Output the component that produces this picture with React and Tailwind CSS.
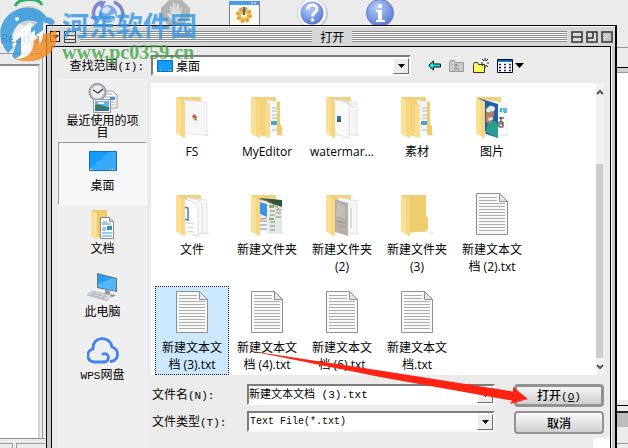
import React, { useState } from 'react'

const places = [
    { name: "最近使用的项目", icon: "recent" },
    { name: "桌面", icon: "desktop" },
    { name: "文档", icon: "docs" },
    { name: "此电脑", icon: "pc" },
    { name: "WPS网盘", icon: "cloud" },
]

const files = [
    { name: "FS", kind: "fs" },
    { name: "MyEditor", kind: "nested" },
    { name: "watermar...", kind: "papers" },
    { name: "素材", kind: "nested" },
    { name: "图片", kind: "photo" },
    { name: "文件", kind: "word" },
    { name: "新建文件夹", kind: "web" },
    { name: "新建文件夹 (2)", kind: "gray" },
    { name: "新建文件夹 (3)", kind: "empty" },
    { name: "新建文本文档 (2).txt", kind: "txt" },
    { name: "新建文本文档 (3).txt", kind: "txt" },
    { name: "新建文本文档 (4).txt", kind: "txt" },
    { name: "新建文本文档 (6).txt", kind: "txt" },
    { name: "新建文本文档.txt", kind: "txt" },
]

const TextFile = () => (
    <svg className="w-8 h-[44px]" viewBox="0 0 32 44">
        <path d="M.5.5h23l8 8v33H.5z" fill="#f8f9f9" stroke="#8f8f8f" />
        <path d="M23.5.5v8h8z" fill="#e3e5e6" stroke="#8f8f8f" />
        <path d="M3 4.5h18M3 7.5h18M3 10.5h26M3 13.5h26M3 16.5h26M3 19.5h26M3 22.5h26M3 25.5h26M3 28.5h26M3 31.5h26M3 34.5h26M3 37.5h26" stroke="#adadad" />
    </svg>
)

const FolderContent = ({ kind }) => {
    switch (kind) {
        case "fs":
            return (
                <>
                    <path d="M8 5l23 2v33l-22-1z" fill="#f6f6f7" stroke="#dcdcdc" strokeWidth=".6" />
                    <path d="M18 19l3 3-1 2-4-2z" fill="#d8452f" />
                    <path d="M16 23l3 1 2 0-1 2z" fill="#4b9b4c" />
                </>
            )
        case "nested":
            return (
                <>
                    <path d="M16 5l11 2v32H16z" fill="#f4f6f8" />
                    <path d="M21 13h5M21 16h5M21 20h5M21 23h5M21 35h5" stroke="#a5bccb" strokeWidth="1" />
                    <path d="M20 26h6v4h-6z" fill="#4a9fd4" />
                    <path d="M26 6l3 1v22l2 2v9h-5z" fill="#f1cb6a" />
                    <path d="M9 5l10 4v34L9 40z" fill="#f5d37d" />
                    <path d="M14 9l5 0v34l-5-1z" fill="#f9dd92" />
                </>
            )
        case "papers":
            return (
                <>
                    <path d="M12 4l19 4v33l-10-2z" fill="#f5f5f5" stroke="#d8d8d8" strokeWidth=".6" />
                    <path d="M8 4l15 5v34L9 39z" fill="#fafafa" stroke="#cfcfcf" strokeWidth=".6" />
                    <path d="M10 4c7 1 14 3 17 9" fill="none" stroke="#d9d0ae" />
                    <path d="M11 21h4v6h-4z" fill="#2a7bc6" />
                    <path d="M11 25l4-1v3h-4z" fill="#2c6a3c" />
                </>
            )
        case "photo":
            return (
                <>
                    <path d="M10 5l21 3v32l-10 1z" fill="#fbfbfb" stroke="#ddd" strokeWidth=".5" />
                    <path d="M24 14l2 3M26 13l-2 4M28 13v3c0 2 2 2 2 0v-3" stroke="#22a8d8" strokeWidth="1.5" fill="none" />
                    <path d="M23 23h5M25 22v5M23 27h4v5h-4zM24 29h3" stroke="#2d2d2d" fill="none" />
                    <path d="M2 3l20 6v34L10 39z" fill="#2160ac" />
                    <path d="M10 37c1-8 3-10 5-11 5-1 7 4 7 7v10z" fill="#2a9f8c" />
                    <path d="M10 18c2-6 8-6 8-1l-1 8-4 4-3-2z" fill="#b98365" />
                    <path d="M10 16c0-4 6-8 9-3 0 3-2 4-4 3-2 2-4 1-5 0zM12 23l4-1 1 2-4 2z" fill="#e6ebee" />
                </>
            )
        case "word":
            return (
                <>
                    <path d="M14 5l17 2v33l-10 1z" fill="#f4f4f4" stroke="#d7d7d7" strokeWidth=".6" />
                    <path d="M10 4l12 3 4 6v26l-4 3z" fill="#f9f9f9" stroke="#ccc" strokeWidth=".6" />
                    <path d="M8 6l10 3 4 5v29L9 39z" fill="#fff" stroke="#c7c7c7" strokeWidth=".6" />
                    <path d="M8 14l4 1v12l-4-1" fill="none" stroke="#3f7be0" strokeWidth="1.5" />
                    <path d="M10 30l8 1M11 34l8 1M11 38l7 1" stroke="#c5c5c5" strokeWidth=".8" />
                </>
            )
        case "web":
            return (
                <>
                    <path d="M8 5l23 3v33l-14 0z" fill="#e5e8e5" />
                    <path d="M8 5l23 2v7l-12-4z" fill="#235b3a" />
                    <path d="M7 7l10 2v32l-8-2z" fill="#f5f8fa" />
                    <path d="M9 9l7 2v13l-7-3z" fill="#3b91ed" />
                    <path d="M9 28h7M9 32h7M9 36h7M19 18h5M19 22h5M19 29h5M19 33h5M19 37h5M25 17h5M25 20h5M25 24h5" stroke="#7e8d83" strokeWidth="1" />
                    <path d="M18 12h5v3h-5zM18 25h5v2h-5z" fill="#7fb96a" />
                    <path d="M6 6l12 2 10 8M9 26l7-1" stroke="#d8493c" strokeWidth=".8" fill="none" />
                </>
            )
        case "gray":
            return (
                <>
                    <path d="M12 4l19 4v33l-12-1z" fill="#f6f6f6" stroke="#d5d5d5" strokeWidth=".6" />
                    <path d="M25 15v20" stroke="#bfc4d4" />
                    <path d="M8 6l14 4v33L9 39z" fill="#b4b0a9" />
                    <path d="M11 10l8 3v12l-9-2z" fill="#c2beb7" />
                    <path d="M11 28l9 2M12 33l8 1" stroke="#9c978f" />
                </>
            )
        default:
            return (
                <path d="M8 2h17v21l2 2v12l-19 3z" fill="#efcc6c" />
            )
    }
}

const FileIcon = ({ kind }) => {
    if (kind === "txt") return <TextFile />
    return (
        <svg className="w-8 h-[44px] overflow-visible" viewBox="0 0 32 44">
            <path d="M26 40l8-1-3 2z" fill="#e2e2e2" />
            <path d="M1 2h24v37H9z" fill="#f3d07a" />
            <FolderContent kind={kind} />
            <path d="M0 2l9 5v36.500l-9-5z" fill="#fbdf92" />
            <path d="M5 5l4 2v36l-4-2z" fill="#f6d583" />
        </svg>
    )
}

const PlaceIcon = ({ icon }) => {
    switch (icon) {
        case "recent":
            return (
                <svg className="w-8 h-8" viewBox="0 0 32 32">
                    <path d="M16 9h10l4 4v13H16z" fill="#fff" stroke="#999" />
                    <path d="M18 12h7M18 15h10M24 20h4M24 23h4" stroke="#9aaabd" />
                    <path d="M23 15h5v3h-5z" fill="#4b8dcb" />
                    <circle cx="10.500" cy="10" r="8.500" fill="#b5b8ba" stroke="#83878a" />
                    <circle cx="10.500" cy="10" r="6.500" fill="#ececec" />
                    <path d="M6 8l5 3 5-4" stroke="#333" fill="none" strokeWidth="1.300" />
                    <path d="M6.500 17.500h17v13h-17z" fill="#fff" stroke="#999" />
                    <path d="M8 19h14v10H8z" fill="#68b3ea" />
                    <path d="M8 23c5-2 9 2 14 2v4H8z" fill="#3d7a5a" />
                    <path d="M8 27h14v2H8z" fill="#2f6fb4" />
                    <path d="M11 21h6" stroke="#eaf6ff" strokeWidth="2" />
                </svg>
            )
        case "desktop":
            return (
                <svg className="w-8 h-8" viewBox="0 0 32 32">
                    <path d="M2.500 6.500h27v19h-27z" fill="#149cfc" stroke="#0a6fc4" />
                    <path d="M3 23L22 7h7v18H3z" fill="#37a9fb" />
                    <path d="M3 24.500h2M23 24.500h1M25 24.500h1M27 24.500h1" stroke="#fff" />
                </svg>
            )
        case "docs":
            return (
                <svg className="w-8 h-8" viewBox="0 0 32 32">
                    <path d="M4 2h16v27H8z" fill="#efcb6b" />
                    <path d="M4 2l6 4v26l-6-4z" fill="#fbe09a" />
                    <path d="M13.500 9.500h9l4 4v17h-13z" fill="#fff" stroke="#85898c" />
                    <path d="M22.500 9.500v4h4" fill="#ddd" stroke="#85898c" />
                    <path d="M16 14h4M15 16h9M15 20h4M15 22h4M15 25h10M15 28h10" stroke="#3a93cf" />
                    <path d="M20 18h5v4h-5z" fill="#3b8db0" />
                </svg>
            )
        case "pc":
            return (
                <svg className="w-8 h-8" viewBox="0 0 32 32">
                    <path d="M10 2l20 5v14L10 17z" fill="#6a7075" />
                    <path d="M11 3l18 5v12L11 16z" fill="#2a9df0" />
                    <path d="M11 13L26 7l3 1v12l-18-4z" fill="#53b6f7" />
                    <path d="M18 19l5 1v3l6 1-3 2-11-2 3-1z" fill="#8f9598" />
                    <path d="M5 20l19 4-4 6L0 24z" fill="#d9dcdf" stroke="#a5abb0" strokeWidth=".6" />
                    <path d="M4 22l16 4M3 24l16 4M9 21l-4 4M14 22l-4 5M19 23l-4 5" stroke="#9fa6ac" strokeWidth=".7" />
                </svg>
            )
        default:
            return (
                <svg className="w-8 h-8" viewBox="0 0 32 32" fill="none" stroke="#3f83f0" strokeWidth="2.800" strokeLinecap="round">
                    <path d="M17 28H7C-1 27-1 17 6 15 5 2 23 1 25 13c8 3 7 13-1 14.500" />
                    <path d="M17 28c7-1 5-10-1-8" />
                </svg>
            )
    }
}

// latin text in the dialog font is half the width of a CJK glyph
const Mono = ({ children }) => (
    <span className="font-['Liberation_Mono',monospace] text-[11px]">{children}</span>
)

const Triangle = () => (
    <svg className="w-[7px] h-1" viewBox="0 0 7 4"><path d="M0 0h7L3.500 4z" fill="#000" /></svg>
)

const arrowBox = "flex items-center justify-center w-4 h-4 bg-[#ededed] border border-t-white border-l-white border-r-[#6c6c6c] border-b-[#6c6c6c]"
const field = "relative flex items-center h-[21px] bg-white border-2 border-t-[#7d7d7d] border-l-[#7d7d7d] border-r-[#f8f8f8] border-b-[#f8f8f8]"

const AppToolbar = () => (
    <header className="relative h-[47px] shrink-0 bg-[#ebebeb]">
        <svg className="absolute left-0 top-0 w-[400px] h-[28px]" viewBox="0 0 400 28">
            <defs>
                <radialGradient id="ball" cx=".4" cy=".3" r=".8">
                    <stop offset="0" stopColor="#b9cdf8" />
                    <stop offset="1" stopColor="#4a6fd0" />
                </radialGradient>
            </defs>
            {/* disc */}
            <ellipse cx="29" cy="16" rx="14" ry="10" fill="#c9d2d2" />
            <path d="M15 6c3-8 24-9 27-1" stroke="#2fae66" strokeWidth="3" fill="none" />
            {/* globe */}
            <circle cx="108" cy="14" r="9" fill="#79a7ea" />
            <path d="M102 9l5-3 4 3-3 4-5 1zM109 16l6-3 1 4-4 4z" fill="#d5e8fa" />
            <path d="M96 21C90 11 96 4 102 2M114 2c9 4 11 13 6 19" stroke="#8087cf" strokeWidth="3.500" fill="none" />
            <path d="M97 2l9-1-4 8z" fill="#8087cf" />
            {/* stop */}
            <path d="M169 0h13l8 8v10l-7 7h-15l-7-7V8z" fill="#b3b3b3" />
            <path d="M172 21l-5-7 2-1 2 2-1-9h2l1 6V3h2l1 8 1-7h2v8l2-5 1 1-2 10-2 3z" fill="#dcdcdc" />
            {/* settings window */}
            <path d="M229.500 1.500h30v24h-30z" fill="#fcf8ec" stroke="#6b8098" />
            <path d="M229 1h31v4h-31z" fill="#4b9de3" />
            <path d="M251 3h2M254 3h2" stroke="#fff" /><path d="M257 3h2" stroke="#e4572c" />
            <circle cx="244" cy="15" r="6.500" fill="#edb945" stroke="#e0a040" strokeWidth="3" strokeDasharray="3 2" />
            <circle cx="244" cy="15" r="3" fill="#fff0cf" />
            <path d="M244 7v8" stroke="#666" strokeWidth="2.500" />
            {/* help */}
            <circle cx="314" cy="14" r="14" fill="#c3c6cd" />
            <circle cx="312" cy="13" r="14.500" fill="#f8f8f8" stroke="#cfd3dc" />
            <circle cx="312" cy="13" r="11.500" fill="url(#ball)" />
            <path d="M307.500 9.500c0-6 9.500-6 9.500-.5 0 3.500-4.500 3.500-4.500 7.500" stroke="#fff" strokeWidth="3" fill="none" />
            <circle cx="312.500" cy="20" r="1.800" fill="#fff" />
            {/* info */}
            <circle cx="380" cy="13" r="13.500" fill="url(#ball)" stroke="#7079c4" />
            <circle cx="380" cy="6" r="2.200" fill="#fff" />
            <path d="M376 10h6v10h3v2h-9v-2h2v-8h-2z" fill="#fff" />
        </svg>
        <span className="absolute left-0 top-[29px] whitespace-nowrap text-[13px] leading-[18px] text-[#6d7b8b]">Read alo</span>
    </header>
)

const Watermark = () => (
    <div className="pointer-events-none absolute left-0 top-[6px] flex items-start gap-1 opacity-80">
        <svg className="w-[58px] h-[58px]" viewBox="0 0 58 58">
            <path d="M8 47C-4 33-2 14 14 5c13-7 28-3 34 8l-9 4c-8-4-17-3-22 3-6 7-6 14-4 22z" fill="#2e97dc" />
            <path d="M20 24l10-8 4 4v8l9-6v12l-4 3v-8l-8 6v16c-7 4-13 4-18 0l7-8V32l-6 4-2-5z" fill="#fff" />
            <path d="M31 22l10-8 2 2v8l-8 6v-6l-4 3zM12 50l6-17 3-2v18l-6 4z" fill="#2e97dc" />
            <path d="M45 12c3-2 8 0 10 4l-4 5c-1-3-4-5-8-4z" fill="#2e97dc" />
            <path d="M56 24C61 43 43 62 14 53c14 0 19-6 20-18l5-4v8c3-4 4-6 4-11 5 0 9-2 13-4z" fill="#f08a1d" />
            <circle cx="17" cy="13" r="2" fill="#fff" />
        </svg>
        <div className="whitespace-nowrap pt-1">
            <p className="font-['Noto_Sans_CJK_SC',sans-serif] text-[27px] leading-[30px] font-bold text-[#3297e4]">河东软件园</p>
            <p className="font-['Liberation_Serif',serif] text-[20px] leading-6 font-bold text-[#43a547]">www.pc0359.cn</p>
        </div>
    </div>
)

const TitleBar = () => (
    <div className="flex items-center h-5 pl-[3px] pr-[2px] bg-[#d6d6d6] border-t border-white">
        <button aria-label="menu" className="flex items-center justify-center w-[10px] h-[11px] border border-black bg-[#e4e4e4]">
            <Triangle />
        </button>
        <button aria-label="shade" className="ml-1 w-3 h-3 border border-[#444] bg-[repeating-linear-gradient(to_bottom,#e2e2e2_0_3px,#444_3px_4px)]"></button>
        <div className="ml-1 grow-[228] h-[11px] bg-[repeating-linear-gradient(to_bottom,#8c8c8c_0_1px,#fafafa_1px_2px)]"></div>
        <h1 className="px-2 text-xs leading-4">打开</h1>
        <div className="mr-1 grow-[211] h-[11px] bg-[repeating-linear-gradient(to_bottom,#8c8c8c_0_1px,#fafafa_1px_2px)]"></div>
        <div className="flex gap-[3px]">
            <button aria-label="minimize" className="w-3 h-3">
                <svg viewBox="0 0 12 12"><path d="M1 1h10v10H1zM1 6h10" fill="#dadada" stroke="#333" strokeWidth="1.500" /></svg>
            </button>
            <button aria-label="restore" className="w-3 h-3">
                <svg viewBox="0 0 12 12"><path d="M1 1h10v10H1zM1 7h6V1" fill="#dadada" stroke="#333" strokeWidth="1.500" /></svg>
            </button>
            <button aria-label="close" className="w-3 h-3">
                <svg viewBox="0 0 12 12"><path d="M1 1h10v10H1z" fill="#c3c3c3" stroke="#333" strokeWidth="1.500" /><path d="M3 8l5-5" stroke="#eee" /></svg>
            </button>
        </div>
    </div>
)

const LookIn = () => (
    <div className="flex items-center h-[21px] pr-[6px]">
        <label htmlFor="lookin" className="w-[93px] pr-px text-right whitespace-nowrap">查找范围<Mono>(I):</Mono></label>
        <div className={`${field} ml-[6px] grow max-w-[260px]`}>
            <svg className="absolute left-1 w-4 h-3 pointer-events-none" viewBox="0 0 16 12">
                <path d="M.5.5h15v11H.5z" fill="#149cfc" stroke="#0a6fc4" />
                <path d="M3 10.500h1M11 10.500h1M13 10.500h1" stroke="#fff" />
            </svg>
            <select id="lookin" className="w-full appearance-none bg-transparent pl-[23px] text-xs leading-4 outline-none">
                <option>桌面</option>
            </select>
            <span className={`${arrowBox} absolute right-0 pointer-events-none`}><Triangle /></span>
        </div>
        <div className="flex items-center gap-2 ml-[17px]">
            <button aria-label="back">
                <svg className="w-[13px] h-[11px]" viewBox="0 0 13 11"><path d="M.7 5.500L5.500 1v3h7v3h-7v3z" fill="#10eef0" stroke="#000" /></svg>
            </button>
            <button aria-label="up" disabled>
                <svg className="w-4 h-[14px]" viewBox="0 0 16 14">
                    <path d="M.5 3.500l1-2h4l1 2h8v9H.5z" fill="#c9c9c9" stroke="#9b9b9b" />
                    <path d="M5 10h5M7 10V6M5 7l2-2 2 2" stroke="#8e8e8e" fill="none" />
                </svg>
            </button>
            <button aria-label="new folder">
                <svg className="w-4 h-4" viewBox="0 0 16 16">
                    <path d="M.5 6.500l1-2h3l1 2h6v8H.5z" fill="#ffff5e" stroke="#333" />
                    <path d="M12 0v3M12 7v3M8 5h2M14 5h2M9 1l2 2M15 1l-2 2M15 9l-2-2M9 8l1-1" stroke="#222" />
                </svg>
            </button>
            <button aria-label="view">
                <svg className="w-[28px] h-[14px]" viewBox="0 0 28 14">
                    <path d="M.5.5h15v13H.5z" fill="#fff" stroke="#000" />
                    <path d="M1 1h14v2H1z" fill="#0b72d8" />
                    <path d="M2 5.500h2M2 8.500h2M2 11.500h2M7 5.500h2M7 8.500h2M7 11.500h2M12 5.500h2M12 8.500h2M12 11.500h2" stroke="#111a80" strokeWidth="1.500" />
                    <path d="M18 4h9l-4.500 5z" fill="#000" />
                </svg>
            </button>
        </div>
    </div>
)

const App = () => {
    const [selected, setSelected] = useState("新建文本文档 (3).txt")

    return (
        <div className="relative flex flex-col h-screen overflow-hidden bg-[#ebebeb] text-black font-['Open_Sans','Noto_Sans_CJK_SC',sans-serif]">
            <AppToolbar />

            {/* Window behind the dialog */}
            <div className="flex grow justify-between min-h-0">
                <div className="flex flex-col w-[46px] pt-[6px] border-r border-[#e4e4e4]">
                    <div className="grow flex flex-col mr-[2px] pt-[10px] pr-[2px] border-t border-r border-[#999] rounded-tr-sm">
                        <div className="grow bg-white border-t-2 border-r-2 border-t-[#8d8d8d] border-r-[#d5d5d5]"></div>
                    </div>
                    <div className="flex gap-[3px] h-[10px] pt-1 border-t border-[#8c8c8c]">
                        <div className="w-[13px] border-t border-r border-[#999]"></div>
                        <div className="grow border-t border-l border-[#999]"></div>
                    </div>
                </div>
                <div className="flex flex-col w-[12px]">
                    <div className="h-[21px] border-t border-t-[#999] border-b border-b-black"></div>
                    <div className="h-[5px] bg-[#d0d0d0] border-b border-[#999]"></div>
                    <div className="grow bg-white"></div>
                    <div className="h-[6px] border-b border-black"></div>
                    <div className="h-[7px] border-b-2 border-[#222]"></div>
                    <div className="h-[14px] bg-[#bdbdbd]"></div>
                    <div className="h-[17px] border-b border-[#999]"></div>
                    <div className="h-1"></div>
                </div>
            </div>

            {/* Open dialog */}
            <section className="absolute top-[25px] bottom-0 left-[46px] right-[11px] flex flex-col border-t border-l border-r-2 border-black bg-[#c8c8c8] font-['Noto_Sans_CJK_SC',sans-serif]">
                <TitleBar />
                <div className="grow flex flex-col ml-1 mr-[4px] border-t border-l border-r border-black bg-[#ebebeb] pt-2 text-xs leading-4 shadow-[1px_0_0_#f6f6f6]">
                    <LookIn />

                    <div className="flex grow mt-[3px] pl-[6px] pr-[6px]">
                        <ul className="w-[89px] shrink-0 bg-[#efefef]">
                            {places.map((place) => (
                                <li key={place.name}>
                                    <button
                                        className={`flex flex-col items-center w-full px-[6px] pt-[2px] leading-3 border ${place.icon === "desktop"
                                            ? "h-[63px] bg-[#f7f7f7] border-t-[#999] border-l-[#999] border-r-white border-b-white"
                                            : "h-[63px] border-transparent"}`}
                                    >
                                        <PlaceIcon icon={place.icon} />
                                        <span className={place.icon === "recent" ? "" : "pt-[2px]"}>
                                            {place.icon === "cloud" ? <><Mono>WPS</Mono>网盘</> : place.name}
                                        </span>
                                    </button>
                                </li>
                            ))}
                        </ul>

                        <div className="grow flex flex-col ml-1">
                            <div className="flex h-[292px] mt-1">
                                <ul className="grow flex flex-wrap content-start gap-x-px pt-[7px] pl-1 bg-white">
                                    {files.map((file) => (
                                        <li key={file.name} className="w-[74px] h-[98px]">
                                            <button
                                                onClick={() => setSelected(file.name)}
                                                className={`flex flex-col items-center w-full h-[89px] pt-1 px-px border font-['Open_Sans','Noto_Sans_CJK_SC',sans-serif] leading-[17px] ${file.name === selected
                                                    ? "bg-[#cce8ff] border-dotted border-[#222]"
                                                    : "border-transparent"}`}
                                            >
                                                <FileIcon kind={file.kind} />
                                                <span className="pt-1">{file.name}</span>
                                            </button>
                                        </li>
                                    ))}
                                </ul>
                                <div className="flex flex-col w-4 bg-[#f0f0f0]">
                                    <button aria-label="scroll up" className="flex items-center justify-center h-[17px]">
                                        <svg className="w-2 h-[6px]" viewBox="0 0 8 6"><path d="M1 5l3-3 3 3" fill="none" stroke="#555" strokeWidth="2" /></svg>
                                    </button>
                                    <div className="grow pt-16 pr-px">
                                        <div className="h-full bg-[#cdcdcd]"></div>
                                    </div>
                                    <button aria-label="scroll down" className="flex items-center justify-center h-[17px]">
                                        <svg className="w-2 h-[6px]" viewBox="0 0 8 6"><path d="M1 1l3 3 3-3" fill="none" stroke="#555" strokeWidth="2" /></svg>
                                    </button>
                                </div>
                            </div>

                            <form className="flex mt-[9px]" onSubmit={(e) => e.preventDefault()}>
                                <div className="grow flex flex-col gap-[6px]">
                                    <div className="flex items-center">
                                        <label htmlFor="filename" className="w-24 pl-px">文件名<Mono>(N):</Mono></label>
                                        <div className={`${field} grow`}>
                                            <input
                                                id="filename"
                                                value={selected}
                                                onChange={(e) => setSelected(e.target.value)}
                                                className="w-full min-w-0 bg-transparent font-['Liberation_Mono','Noto_Sans_CJK_SC',monospace] text-[11px] leading-4 outline-none"
                                            />
                                            <button type="button" aria-label="recent names" className={`${arrowBox} shrink-0`}><Triangle /></button>
                                        </div>
                                    </div>
                                    <div className="flex items-center">
                                        <label htmlFor="filetype" className="w-24 pl-px">文件类型<Mono>(T):</Mono></label>
                                        <div className={`${field} grow`}>
                                            <select id="filetype" className="w-full appearance-none bg-transparent pl-px font-['Liberation_Mono',monospace] text-[10px] leading-4 outline-none">
                                                <option>Text File(*.txt)</option>
                                            </select>
                                            <span className={`${arrowBox} absolute right-0 pointer-events-none`}><Triangle /></span>
                                        </div>
                                    </div>
                                </div>
                                <div className="flex flex-col gap-1 w-[90px] ml-[19px]">
                                    <button type="submit" className="h-[23px] rounded border-[3px] border-[#929292] bg-linear-to-b from-[#f4f4f4] to-[#cfcfcf] leading-4 font-medium">打开<Mono>(<u>O</u>)</Mono></button>
                                    <button type="button" className="h-[23px] rounded border-2 border-[#929292] bg-linear-to-b from-[#fafafa] to-[#cfcfcf] leading-4 font-medium">取消</button>
                                </div>
                            </form>
                        </div>
                    </div>
                    <div className="absolute bottom-0 right-[5px] w-[17px] h-[10px] bg-white"></div>
                </div>
            </section>

            <Watermark />

            {/* Pointer to the open button */}
            <svg className="pointer-events-none absolute left-[250px] top-[350px] w-[280px] h-[56px]" viewBox="0 0 280 56">
                <path d="M0 1L130 20.500 263 41.500 263 37 278 49 260 54 262 50.500 130 27z" fill="#ff2314" />
            </svg>
        </div>
    )
}

export default App
